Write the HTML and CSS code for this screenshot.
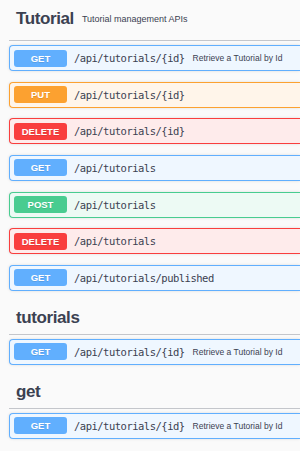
FILE: index.html
```html
<!DOCTYPE html>
<html lang="en">
<head>
    <meta charset="UTF-8">
    <meta name="viewport" content="width=device-width, initial-scale=1.0">
    <title>Tutorial API</title>
    <link rel="stylesheet" href="styles.css">
</head>
<body>

    <div class="page">

        <section class="tag">
            <h3 class="tag-head top">
                <span class="tag-name">Tutorial</span>
                <small class="tag-desc">Tutorial management APIs</small>
            </h3>
            <div class="op op-get">
                <span class="method">GET</span>
                <span class="path">/api/tutorials/{id}</span>
                <span class="summary">Retrieve a Tutorial by Id</span>
            </div>
            <div class="op op-put">
                <span class="method">PUT</span>
                <span class="path">/api/tutorials/{id}</span>
            </div>
            <div class="op op-delete">
                <span class="method">DELETE</span>
                <span class="path">/api/tutorials/{id}</span>
            </div>
            <div class="op op-get">
                <span class="method">GET</span>
                <span class="path">/api/tutorials</span>
            </div>
            <div class="op op-post">
                <span class="method">POST</span>
                <span class="path">/api/tutorials</span>
            </div>
            <div class="op op-delete">
                <span class="method">DELETE</span>
                <span class="path">/api/tutorials</span>
            </div>
            <div class="op op-get">
                <span class="method">GET</span>
                <span class="path">/api/tutorials/published</span>
            </div>
        </section>

        <section class="tag">
            <h3 class="tag-head">
                <span class="tag-name">tutorials</span>
            </h3>
            <div class="op op-get">
                <span class="method">GET</span>
                <span class="path">/api/tutorials/{id}</span>
                <span class="summary">Retrieve a Tutorial by Id</span>
            </div>
        </section>

        <section class="tag">
            <h3 class="tag-head">
                <span class="tag-name">get</span>
            </h3>
            <div class="op op-get">
                <span class="method">GET</span>
                <span class="path">/api/tutorials/{id}</span>
                <span class="summary">Retrieve a Tutorial by Id</span>
            </div>
        </section>

    </div>

</body>
</html>
```

FILE: styles.css
```css
body {
    font-family: "Liberation Sans", Arial, sans-serif;
    background-color: #fafafa;
    color: #3b4151;
    margin: 0;
    padding: 8px 0 0 9px;
}

.tag {
    margin-bottom: 11px;
}

.tag-head {
    box-sizing: border-box;
    height: 33px;
    margin: 0 0 4px 0;
    padding: 0 0 0 7px;
    display: flex;
    align-items: center;
    border-bottom: 1px solid #c4c6cb;
}

.tag-head.top {
    padding-bottom: 11px;
}

.tag-name {
    font-size: 17px;
    font-weight: bold;
    letter-spacing: -0.4px;
}

.tag-desc {
    font-size: 9px;
    font-weight: normal;
    margin-left: 8px;
    margin-top: 1px;
}

.op {
    box-sizing: border-box;
    height: 26px;
    display: flex;
    align-items: center;
    padding: 0 4px;
    margin-bottom: 10.67px;
    border: 1px solid;
    border-right-width: 0;
    border-radius: 4px 0 0 4px;
    box-shadow: 0 0 3px rgba(0, 0, 0, 0.12);
    white-space: nowrap;
    overflow: hidden;
}

.op:last-child {
    margin-bottom: 0;
}

.method {
    width: 53px;
    height: 17px;
    line-height: 17px;
    flex-shrink: 0;
    text-align: center;
    color: #ffffff;
    font-size: 9.5px;
    font-weight: bold;
    border-radius: 3px;
    text-shadow: 0 1px 0 rgba(0, 0, 0, 0.1);
}

.path {
    font-family: "DejaVu Sans Mono", monospace;
    font-size: 10.5px;
    letter-spacing: -0.5px;
    margin-left: 7px;
    color: #3b4151;
}

.summary {
    font-size: 8.5px;
    margin-left: 8px;
    color: #3b4151;
}

.op-get { background-color: #eff7ff; border-color: #61affe; }
.op-get .method { background-color: #61affe; }

.op-put { background-color: #fff5ea; border-color: #fca130; }
.op-put .method { background-color: #fca130; }

.op-delete { background-color: #feebeb; border-color: #f93e3e; }
.op-delete .method { background-color: #f93e3e; }

.op-post { background-color: #edfaf4; border-color: #49cc90; }
.op-post .method { background-color: #49cc90; }
```
